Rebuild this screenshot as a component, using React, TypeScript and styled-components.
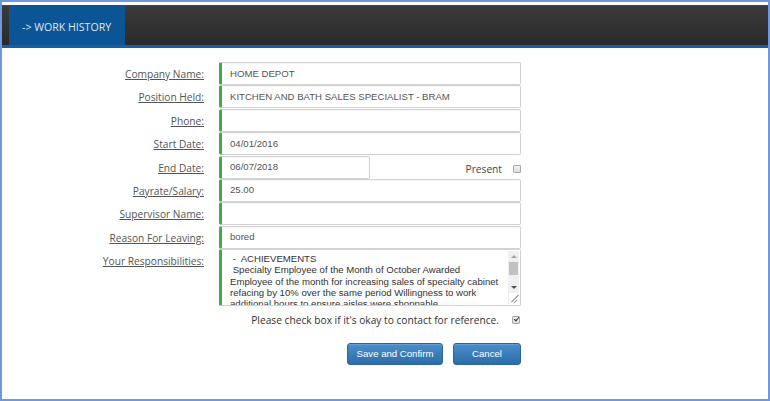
import React from "react";
import styled, { createGlobalStyle } from "styled-components";

const GlobalStyle = createGlobalStyle`
  html, body { margin: 0; padding: 0; background: #ffffff; }
  * { box-sizing: border-box; }
`;

const Frame = styled.div`
  width: 770px;
  height: 401px;
  border: 2px solid #7098dc;
  padding-top: 3px;
  background: #fff;
  display: flex;
  flex-direction: column;
`;

const Header = styled.div`
  height: 43px;
  flex: none;
  padding-left: 7px;
  background: linear-gradient(#4a4a4a 0px, #3a3a3a 2px, #2a2a2a 100%);
  border-bottom: 3px solid #1b5ca6;
  display: flex;
`;

const Tab = styled.div`
  width: 116px;
  background: #0b5596;
  color: #dfe7f0;
  font-family: "Open Sans", sans-serif;
  font-size: 10.6px;
  padding: 4px 0 0 13px;
  display: flex;
  align-items: center;
`;

const Form = styled.div`
  margin-top: 14px;
  display: grid;
  grid-template-columns: 203px 302px;
  column-gap: 14px;
  row-gap: 0.4px;
  grid-auto-rows: auto;
`;

const Label = styled.div<{ $top?: boolean }>`
  font-family: "Open Sans", sans-serif;
  font-size: 10.2px;
  color: #555;
  text-decoration: underline;
  height: ${(p) => (p.$top ? "auto" : "23px")};
  padding-top: ${(p) => (p.$top ? "5px" : "1px")};
  display: flex;
  align-items: ${(p) => (p.$top ? "flex-start" : "center")};
  justify-content: flex-end;
  padding-right: 1px;
`;

const Input = styled.input<{ $w?: number }>`
  display: block;
  width: ${(p) => (p.$w ? `${p.$w}px` : "100%")};
  height: 23px;
  margin: 0;
  border: 1px solid #d2d2d2;
  border-left: 3px solid #45a84b;
  border-radius: 2px;
  padding: 0 0 1px 8px;
  font-family: "Liberation Sans", Arial, sans-serif;
  font-size: 9.6px;
  color: #555;
  background: #fff;
  outline: none;
  box-shadow: inset 0 1px 1px rgba(0, 0, 0, 0.04);
`;

const EndRow = styled.div`
  display: flex;
  align-items: center;
`;

const Present = styled.label`
  margin-left: auto;
  display: flex;
  align-items: center;
  gap: 11px;
  font-family: "Open Sans", sans-serif;
  font-size: 10.2px;
  color: #444;
  padding-top: 4px;
`;

const Check = styled.input`
  appearance: none;
  -webkit-appearance: none;
  margin: 0;
  width: 8px;
  height: 8px;
  flex: none;
  border: 1px solid #a8a8a8;
  border-radius: 1px;
  background: linear-gradient(#f4f4f4, #dcdcdc);
  position: relative;
  &:checked::after {
    content: "";
    position: absolute;
    left: 1.5px;
    top: -0.5px;
    width: 2px;
    height: 4px;
    border: solid #333;
    border-width: 0 1.5px 1.5px 0;
    transform: rotate(40deg);
  }
`;

const AreaWrap = styled.div`
  position: relative;
  height: 57px;
`;

const Area = styled.textarea`
  display: block;
  width: 100%;
  height: 57px;
  margin: 0;
  border: 1px solid #d2d2d2;
  border-left: 3px solid #45a84b;
  border-radius: 2px;
  padding: 3px 16px 0 8px;
  font-family: "Liberation Sans", Arial, sans-serif;
  font-size: 9.6px;
  line-height: 11.3px;
  color: #333;
  resize: none;
  overflow: hidden;
  outline: none;
  white-space: pre;
`;

const ScrollBar = styled.div`
  position: absolute;
  right: 2px;
  top: 2px;
  width: 11px;
  height: 42px;
  background: #f0f0f0;
  display: flex;
  flex-direction: column;
  align-items: center;
`;

const Arrow = styled.div<{ $down?: boolean }>`
  width: 0;
  height: 0;
  margin: 4px 0;
  border-left: 3px solid transparent;
  border-right: 3px solid transparent;
  ${(p) => (p.$down ? "border-top: 3px solid #505050;" : "border-bottom: 3px solid #a3a3a3;")}
`;

const Thumb = styled.div`
  width: 9px;
  height: 13px;
  background: #c2c2c2;
  margin-bottom: auto;
`;

const Grip = styled.div`
  position: absolute;
  right: 2px;
  bottom: 2px;
  width: 11px;
  height: 11px;
  background: #fff;
  border-left: 1px solid #eee;
  overflow: hidden;
`;

const GripLine = styled.div<{ $len: number }>`
  position: absolute;
  right: 1px;
  bottom: ${(p) => p.$len / 2}px;
  width: ${(p) => p.$len}px;
  height: 1px;
  background: #8a8a8a;
  transform: rotate(-45deg);
  transform-origin: center;
  margin-right: ${(p) => -p.$len / 2 + 3}px;
`;

const ContactRow = styled.div`
  grid-column: 2;
  display: flex;
  justify-content: flex-end;
  align-items: center;
  gap: 13px;
  margin-top: 3px;
  font-family: "Open Sans", sans-serif;
  font-size: 10.2px;
  color: #333;
  height: 20px;
  padding-right: 1px;
`;

const Buttons = styled.div`
  grid-column: 2;
  display: flex;
  justify-content: flex-end;
  gap: 10px;
  margin-top: 13px;
`;

const Button = styled.button<{ $w: number }>`
  width: ${(p) => p.$w}px;
  height: 22px;
  margin: 0;
  padding: 0;
  border: 1px solid #2b669a;
  border-radius: 3px;
  background: linear-gradient(#4a8fcc, #2d6ca8);
  color: #fff;
  font-family: "Liberation Sans", Arial, sans-serif;
  font-size: 9.6px;
  box-shadow: inset 0 1px 0 rgba(255, 255, 255, 0.15);
`;

const responsibilities =
  " -  ACHIEVEMENTS\n Specialty Employee of the Month of October Awarded\nEmployee of the month for increasing sales of specialty cabinet\nrefacing by 10% over the same period Willingness to work\nadditional hours to ensure aisles were shoppable\n";

const fields: [string, string][] = [
  ["Company Name:", "HOME DEPOT"],
  ["Position Held:", "KITCHEN AND BATH SALES SPECIALIST - BRAM"],
  ["Phone:", ""],
  ["Start Date:", "04/01/2016"],
];

const fields2: [string, string][] = [
  ["Payrate/Salary:", "25.00"],
  ["Supervisor Name:", ""],
  ["Reason For Leaving:", "bored"],
];

export default function App() {
  return (
    <>
      <GlobalStyle />
      <Frame>
        <Header>
          <Tab>-&gt; WORK HISTORY</Tab>
        </Header>
        <Form>
          {fields.map(([l, v]) => (
            <React.Fragment key={l}>
              <Label>{l}</Label>
              <Input defaultValue={v} />
            </React.Fragment>
          ))}
          <Label>End Date:</Label>
          <EndRow>
            <Input $w={151} defaultValue="06/07/2018" />
            <Present>
              Present
              <Check type="checkbox" />
            </Present>
          </EndRow>
          {fields2.map(([l, v]) => (
            <React.Fragment key={l}>
              <Label>{l}</Label>
              <Input defaultValue={v} />
            </React.Fragment>
          ))}
          <Label $top>Your Responsibilities:</Label>
          <AreaWrap>
            <Area wrap="off" defaultValue={responsibilities} />
            <ScrollBar>
              <Arrow />
              <Thumb />
              <Arrow $down />
            </ScrollBar>
            <Grip>
              <GripLine $len={10} />
              <GripLine $len={5} />
            </Grip>
          </AreaWrap>
          <ContactRow>
            Please check box if it's okay to contact for reference.
            <Check type="checkbox" defaultChecked />
          </ContactRow>
          <Buttons>
            <Button $w={96}>Save and Confirm</Button>
            <Button $w={68}>Cancel</Button>
          </Buttons>
        </Form>
      </Frame>
    </>
  );
}
